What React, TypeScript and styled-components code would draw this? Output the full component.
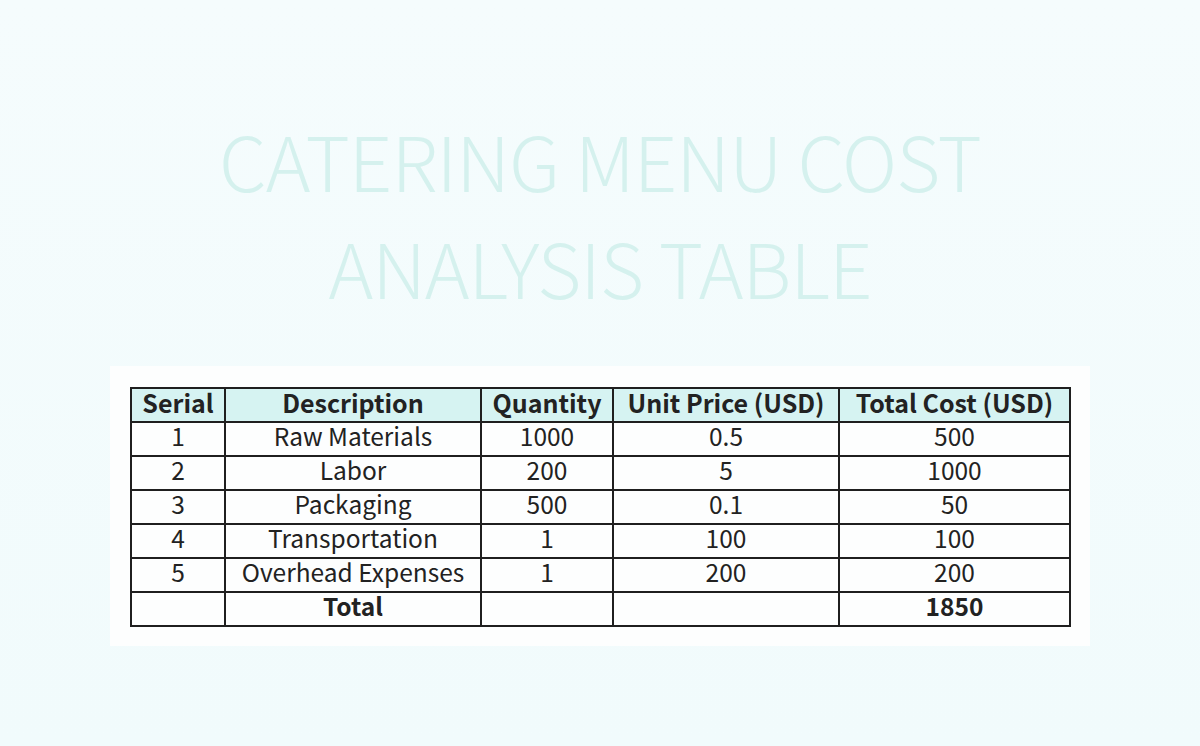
import React from "react";
import styled, { createGlobalStyle } from "styled-components";

const Global = createGlobalStyle`
  html, body { margin: 0; padding: 0; }
  body {
    background: linear-gradient(180deg, #f5fcfd 0%, #f1fbfc 100%);
    font-family: "Noto Sans CJK SC", "Noto Sans", sans-serif;
  }
`;

const Page = styled.div`
  width: 1200px;
  height: 746px;
  display: flex;
  flex-direction: column;
  align-items: center;
  overflow: hidden;
`;

const Title = styled.h1`
  margin: 106px 0 0;
  height: 216px;
  font-family: "Noto Sans CJK SC", "Noto Sans", sans-serif;
  font-weight: 300;
  font-size: 76px;
  line-height: 107px;
  color: #d5f1ee;
  text-align: center;
  letter-spacing: -1px;
`;

const Card = styled.div`
  margin-top: 44px;
  width: 980px;
  box-sizing: border-box;
  padding: 21px 21px 19px 20px;
  background: #fdfefe;
`;

const Table = styled.table`
  width: 939px;
  border-collapse: collapse;
  table-layout: fixed;
  color: #222;
  font-family: "Noto Sans CJK SC", "Noto Sans", sans-serif;
  font-size: 24.5px;
`;

const Cell = styled.td<{ $bold?: boolean; $head?: boolean }>`
  border: 2px solid #1f1f1f;
  height: 34px;
  padding: 0 0 6px;
  box-sizing: border-box;
  text-align: center;
  vertical-align: middle;
  line-height: 22px;
  font-size: ${(p) => (p.$head ? "25px" : "24.5px")};
  font-weight: ${(p) => (p.$bold ? 700 : 400)};
  background: ${(p) => (p.$head ? "#d6f3f2" : "transparent")};
  white-space: nowrap;
`;

const widths = [94, 256, 132, 226, 231];
const head = ["Serial", "Description", "Quantity", "Unit Price (USD)", "Total Cost (USD)"];
const rows = [
  ["1", "Raw Materials", "1000", "0.5", "500"],
  ["2", "Labor", "200", "5", "1000"],
  ["3", "Packaging", "500", "0.1", "50"],
  ["4", "Transportation", "1", "100", "100"],
  ["5", "Overhead Expenses", "1", "200", "200"],
];

export default function App() {
  return (
    <Page>
      <Global />
      <Title>
        CATERING MENU COST
        <br />
        ANALYSIS TABLE
      </Title>
      <Card>
        <Table>
          <colgroup>
            {widths.map((w, i) => (
              <col key={i} style={{ width: w }} />
            ))}
          </colgroup>
          <thead>
            <tr>
              {head.map((h) => (
                <Cell as="th" key={h} $head $bold>
                  {h}
                </Cell>
              ))}
            </tr>
          </thead>
          <tbody>
            {rows.map((r) => (
              <tr key={r[0]}>
                {r.map((c, i) => (
                  <Cell key={i}>{c}</Cell>
                ))}
              </tr>
            ))}
            <tr>
              <Cell />
              <Cell $bold>Total</Cell>
              <Cell />
              <Cell />
              <Cell $bold>1850</Cell>
            </tr>
          </tbody>
        </Table>
      </Card>
    </Page>
  );
}
